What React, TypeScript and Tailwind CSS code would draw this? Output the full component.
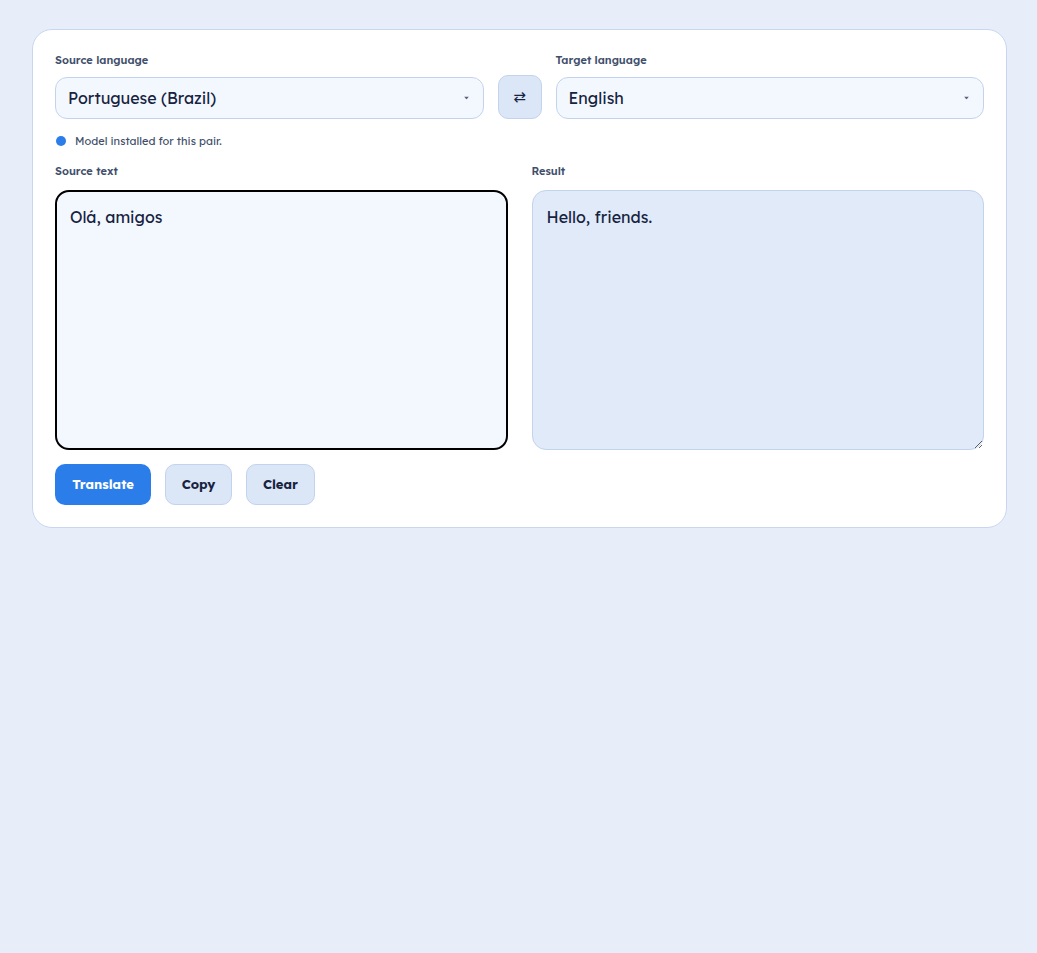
import { useState } from "react";

const languages = ["Portuguese (Brazil)", "English", "Spanish", "French", "German"];

function Caret() {
  return (
    <svg
      className="pointer-events-none absolute right-[15px] top-1/2 -translate-y-1/2"
      width="5"
      height="3"
      viewBox="0 0 5 3"
    >
      <path d="M0 0h5L2.5 3z" fill="#5b6475" />
    </svg>
  );
}

function LanguageSelect({
  label,
  value,
  onChange,
}: {
  label: string;
  value: string;
  onChange: (v: string) => void;
}) {
  return (
    <div className="flex flex-1 flex-col">
      <label className="mb-[9px] text-[11px] font-semibold leading-4 text-[#3f4f6b]">
        {label}
      </label>
      <div className="relative">
        <select
          value={value}
          onChange={(e) => onChange(e.target.value)}
          className="h-[42px] w-full appearance-none rounded-[12px] border border-[#c3d3ee] bg-[#f3f8ff] pl-[12px] pr-8 text-[16px] text-[#17233f] outline-none"
        >
          {languages.map((l) => (
            <option key={l}>{l}</option>
          ))}
        </select>
        <Caret />
      </div>
    </div>
  );
}

export default function App() {
  const [source, setSource] = useState("Portuguese (Brazil)");
  const [target, setTarget] = useState("English");
  const [text, setText] = useState("Olá, amigos");

  return (
    <div
      className="min-h-[953px] bg-[#e7eef9] pl-8 pr-[30px] pt-[29px]"
      style={{ fontFamily: '"Lexend", "Noto Sans", "Open Sans", sans-serif' }}
    >
      <div className="rounded-[20px] border border-[#c8d7ef] bg-white p-[22px]">
        <div className="flex items-end gap-[14px]">
          <LanguageSelect label="Source language" value={source} onChange={setSource} />
          <button
            onClick={() => {
              setSource(target);
              setTarget(source);
            }}
            className="flex h-[44px] w-[44px] shrink-0 items-center justify-center rounded-[10px] border border-[#c3d3ee] bg-[#dbe6f6] text-[15px] text-[#17233f]"
            style={{ fontFamily: '"DejaVu Sans", sans-serif' }}
          >
            ⇄
          </button>
          <LanguageSelect label="Target language" value={target} onChange={setTarget} />
        </div>

        <div className="mt-[14px] flex h-4 items-center gap-[9px]">
          <span className="ml-px h-[10px] w-[10px] rounded-full bg-[#2b7de9]" />
          <span className="text-[11px] text-[#3f4f6b]">Model installed for this pair.</span>
        </div>

        <div className="mt-[14px] grid grid-cols-2 gap-6">
          <div className="flex flex-col">
            <label className="mb-[11px] text-[11px] font-semibold leading-4 text-[#3f4f6b]">
              Source text
            </label>
            <textarea
              value={text}
              onChange={(e) => setText(e.target.value)}
              className="h-[260px] resize-none rounded-[14px] border-2 border-black bg-[#f3f8ff] p-[13px] text-[16px] leading-6 text-[#17233f] outline-none"
            />
          </div>
          <div className="flex flex-col">
            <label className="mb-[11px] text-[11px] font-semibold leading-4 text-[#3f4f6b]">
              Result
            </label>
            <textarea
              readOnly
              value="Hello, friends."
              className="h-[260px] rounded-[14px] border border-[#c3d3ee] bg-[#e0eaf8] p-[14px] text-[16px] leading-6 text-[#17233f] outline-none"
            />
          </div>
        </div>

        <div className="mt-[14px] flex gap-[14px]">
          <button className="h-[41px] w-[96px] rounded-[10px] bg-[#2b7de9] text-[13px] font-bold text-white">
            Translate
          </button>
          <button className="h-[41px] w-[67px] rounded-[10px] border border-[#c3d3ee] bg-[#dbe6f6] text-[13px] font-bold text-[#17233f]">
            Copy
          </button>
          <button
            onClick={() => setText("")}
            className="h-[41px] w-[69px] rounded-[10px] border border-[#c3d3ee] bg-[#dbe6f6] text-[13px] font-bold text-[#17233f]"
          >
            Clear
          </button>
        </div>
      </div>
    </div>
  );
}
